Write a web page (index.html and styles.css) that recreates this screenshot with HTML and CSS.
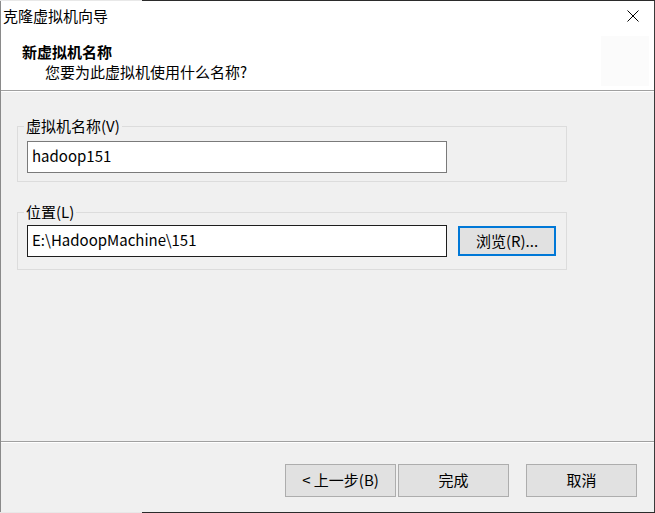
FILE: index.html
```html
<!DOCTYPE html>
<html lang="zh-CN">
<head>
  <meta charset="UTF-8" />
  <title>克隆虚拟机向导</title>
  <link rel="stylesheet" href="styles.css">
</head>
<body>
  <div class="window">
    <div class="edge"></div>
    <div class="frame">
      <div class="titlebar">
        <span class="title">克隆虚拟机向导</span>
        <svg class="close" width="12" height="12" viewBox="0 0 12 12">
          <path d="M0.5 0.5 L11.5 11.5 M11.5 0.5 L0.5 11.5" stroke="#000" stroke-width="1" fill="none"/>
        </svg>
      </div>

      <div class="header">
        <div class="header-text">
          <div class="header-title">新虚拟机名称</div>
          <div class="header-sub">您要为此虚拟机使用什么名称?</div>
        </div>
        <div class="header-icon"></div>
      </div>

      <main class="content">
        <fieldset class="group group-name">
          <legend>虚拟机名称(V)</legend>
          <input type="text" class="field" value="hadoop151" />
        </fieldset>

        <fieldset class="group group-location">
          <legend>位置(L)</legend>
          <div class="row">
            <input type="text" class="field field-active" value="E:\HadoopMachine\151" />
            <button class="btn btn-default">浏览(R)...</button>
          </div>
        </fieldset>
      </main>

      <div class="footer">
        <button class="btn btn-nav">&lt; 上一步(B)</button>
        <button class="btn btn-nav btn-finish">完成</button>
        <button class="btn btn-nav">取消</button>
      </div>
    </div>
    <div class="edge"></div>
  </div>
</body>
</html>
```

FILE: styles.css
```css
body {
  margin: 0;
  padding: 0;
  background: #f0f0f0;
  font-family: "Noto Sans CJK SC", "Noto Sans", sans-serif;
  font-size: 15px;
  color: #000;
}

.window {
  width: 655px;
  height: 513px;
  display: flex;
  flex-direction: column;
}

.edge {
  height: 1px;
  background: linear-gradient(to right, #e8e8e8 142px, #2b2b2b 142px);
}

.frame {
  flex: 1;
  display: flex;
  flex-direction: column;
  border-left: 1px solid #8a8a8a;
  border-right: 1px solid #3a3a3a;
  background: #f0f0f0;
}

.titlebar {
  height: 29px;
  background: #fff;
  display: flex;
  align-items: center;
  justify-content: space-between;
  padding: 0 15px 0 2px;
}

.title {
  line-height: 29px;
}

.close {
  display: block;
  margin-top: 1px;
}

.header {
  height: 60px;
  background: #fff;
  border-bottom: 1px solid #a0a0a0;
  box-shadow: 0 1px 0 #fff;
  display: flex;
  justify-content: space-between;
  padding: 0 5px 0 21px;
}

.header-title {
  font-weight: bold;
  line-height: 20px;
  margin-top: 12px;
}

.header-sub {
  line-height: 20px;
  padding-left: 23px;
}

.header-icon {
  width: 48px;
  height: 50px;
  margin-top: 6px;
  background: #fbfbfb;
}

.content {
  flex: 1;
  padding: 27px 87px 0 16px;
}

.group {
  margin: 0;
  border: 1px solid #dcdcdc;
  padding: 7px 9px 8px 9px;
}

.group legend {
  padding: 0 2px;
  margin-left: -3px;
  line-height: 16px;
}

.group-location {
  margin-top: 22px;
  padding-top: 5px;
  padding-bottom: 12px;
}

.row {
  display: flex;
  align-items: center;
  gap: 11px;
}

.field {
  box-sizing: border-box;
  width: 420px;
  height: 32px;
  margin: 0;
  padding: 0 4px 3px 4px;
  border: 1px solid #7a7a7a;
  background: #fff;
  font-family: "Noto Sans CJK SC", "Noto Sans", sans-serif;
  font-size: 15px;
  color: #000;
  outline: none;
}

.field-active {
  border-color: #1e1e1e;
}

.btn {
  box-sizing: border-box;
  margin: 0;
  padding: 0 0 2px 0;
  background: #e1e1e1;
  border: 1px solid #adadad;
  font-family: "Noto Sans CJK SC", "Noto Sans", sans-serif;
  font-size: 15px;
  color: #000;
}

.btn-default {
  width: 98px;
  height: 30px;
  border: 2px solid #0078d7;
}

.footer {
  height: 71px;
  border-top: 1px solid #a0a0a0;
  box-shadow: inset 0 1px 0 #fff;
  display: flex;
  justify-content: flex-end;
  padding: 22px 17px 0 0;
  box-sizing: border-box;
}

.btn-nav {
  width: 111px;
  height: 33px;
}

.btn-finish {
  margin-left: 2px;
  margin-right: 17px;
}
```
